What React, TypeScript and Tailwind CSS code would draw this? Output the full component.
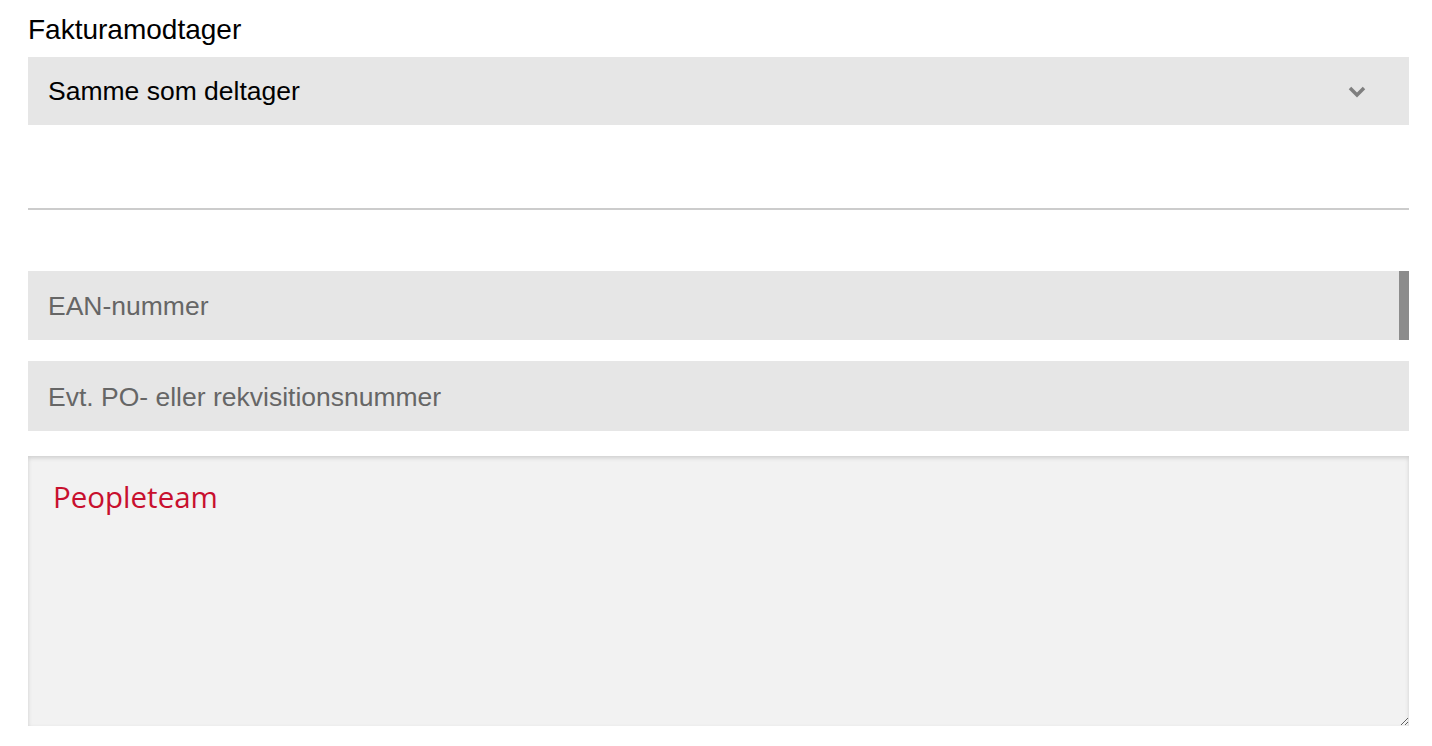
const App = () => {
  return (
    <div className="min-h-[746px] bg-white px-[28px] pt-[12px] pr-[23px]" style={{ fontFamily: '"Liberation Sans", Arial, sans-serif' }}>
      <label className="block text-[28px] leading-[36px] text-black">Fakturamodtager</label>
      <div className="mt-[9px] flex h-[68px] items-center justify-between bg-[#e6e6e6] pl-[20px] pr-[43px]">
        <span className="pt-[2px] text-[26.5px] text-black">Samme som deltager</span>
        <svg width="18" height="12" viewBox="0 0 18 12" className="mt-[1px]">
          <polyline points="2,2 9,9 16,2" fill="none" stroke="#7f7f7f" strokeWidth="3.5" />
        </svg>
      </div>

      <hr className="mt-[83px] border-0 border-t-2 border-[#cccccc]" />

      <div className="mt-[61px] flex h-[69px] items-center justify-between bg-[#e6e6e6] pl-[20px]">
        <input
          className="h-full flex-1 bg-transparent pt-[2px] text-[26.5px] text-black outline-none placeholder:text-[#666666]"
          placeholder="EAN-nummer"
        />
        <div className="h-full w-[10px] bg-[#8c8c8c]" />
      </div>

      <div className="mt-[21px] flex h-[70px] items-center bg-[#e6e6e6] pl-[20px]">
        <input
          className="h-full flex-1 bg-transparent pt-[2px] text-[26.5px] text-black outline-none placeholder:text-[#666666]"
          placeholder="Evt. PO- eller rekvisitionsnummer"
        />
      </div>

      <textarea
        className="mt-[25px] block h-[270px] w-full bg-[#f2f2f2] px-[25px] py-[22px] text-[29.5px] leading-[38px] text-[#c8102e] shadow-[inset_0_2px_4px_rgba(0,0,0,0.15)] outline-none"
        style={{ fontFamily: '"Open Sans", "Noto Sans", sans-serif' }}
        defaultValue="Peopleteam"
      />
    </div>
  );
};

export default App;
